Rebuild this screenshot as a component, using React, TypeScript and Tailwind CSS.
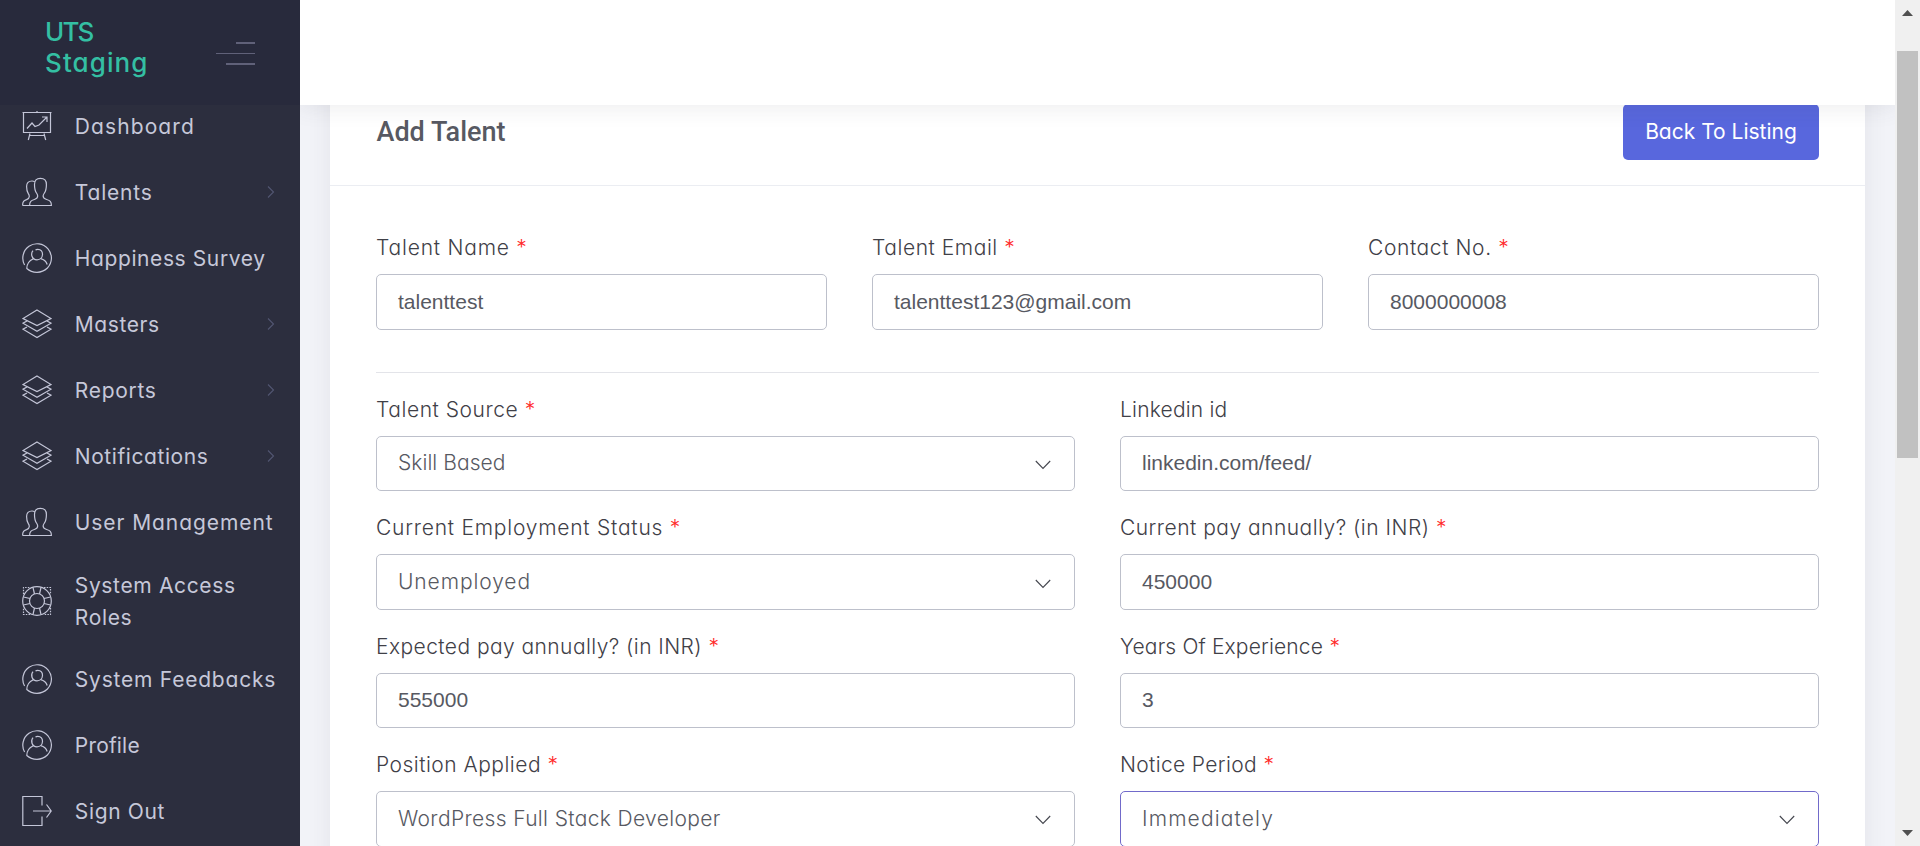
import type { ReactNode } from "react";

const iconPaths: Record<string, ReactNode> = {
  board: (
    <>
      <path d="M.5 1.500h29M1.500 1.500v20h27v-20M15 0v1.500M8 22.500 6.300 29M22 22.500 23.700 29M7.500 24.500h15" />
      <path d="M5 17.500 10 12l3 3.500L17 14l7.500-7.500M20 6h5v5" />
    </>
  ),
  users: (
    <>
      <path d="M.6 28.500h28.800c0-4.200-1.400-5-4.800-6-2.600-.8-3.500-1.700-3.500-3.500 0-1 .5-1.800 1.300-3 1.400-2 2-5 2-8.600C24.400 3.500 22.500 1.400 18.400 1.400S12.500 3.500 12.500 7.400c0 3.600.6 6.600 2 8.600.8 1.200 1.200 2 1.200 3 0 1.800-1 2.700-3.300 3.500-3.200 1.100-4.800 1.800-4.800 6" />
      <path d="M12.700 4.700c-.7-.5-1.600-.7-2.700-.7-3.500 0-5.400 2-5.400 5.400 0 3.200.6 5.600 1.700 7.300.7 1.100 1 1.700 1 2.700 0 1.600-.7 2.300-2.800 3.200-2.600 1-3.900 1.800-3.900 5.900" />
    </>
  ),
  user: (
    <>
      <path d="M2.600 22A14.300 14.300 0 1 1 25.400 25C22 28.300 18.500 29.300 15 29.300S7.500 28 4.800 25.500C4.800 20.500 7.800 17.300 11.300 15.700" />
      <path d="M25.200 21.500c-1-3.200-3.200-5-6.500-5.900" />
      <path d="M11 7.600C8.500 10.500 9.500 16.800 15 16.800c7 0 7.400-10.500.8-10.500-1 0-1.800.3-2.300.8" />
    </>
  ),
  layers: (
    <path d="M15 1 29 9.500 15 16.500 1 9.500ZM5 12 1 14.200 15 22.300l14-8.100-4-2.200M5 18 1 20.200 15 28.500l14-8.300-4-2.200" />
  ),
  ring: (
    <>
      <circle cx="15" cy="15" r="14.300" />
      <circle cx="15" cy="15" r="7.500" />
      <path d="M12.500 8 11 1.500M17.500 8 19 1.500M12.500 22 11 28.500M17.500 22l1.500 6.500M8 12.500 1.500 11M8 17.500 1.500 19M22 12.500l6.500-1.500M22 17.500l6.500 1.500" />
      <path strokeDasharray="1.500 1.200" d="M1.500 8V1.500H8M22 1.500h6.500V8M28.500 22v6.500H22M8 28.500H1.500V22" />
    </>
  ),
  out: <path d="M20 9.500v-9H.8v29H20v-9M11 15h18M24.500 8.500 29.200 15l-4.700 6.500" />,
};

function Icon({ name }: { name: string }) {
  return (
    <svg className="h-[30px] w-[30px] shrink-0" viewBox="0 0 30 30" fill="none" stroke="#c4c6d8" strokeWidth="1.2">
      {iconPaths[name]}
    </svg>
  );
}

function NavItem({ icon, children, spacing, more }: { icon: string; children: ReactNode; spacing: string; more?: boolean }) {
  return (
    <li className="flex min-h-[66px] items-center py-[12.500px] pr-[25px] pl-[22px]">
      <Icon name={icon} />
      <span className={`ml-[22.800px] flex-1 pt-0.5 text-[21px] leading-8 whitespace-nowrap text-[#c6c8d9] ${spacing}`}>{children}</span>
      {more && (
        <svg className="h-3 w-2 shrink-0" viewBox="0 0 8 12" fill="none" stroke="#525672" strokeWidth="1.1">
          <path d="M1 .5 6.500 6 1 11.500" />
        </svg>
      )}
    </li>
  );
}

interface FieldProps {
  label: string;
  labelSpacing: string;
  value: string;
  required?: boolean;
  select?: string;
  focused?: boolean;
  tall?: boolean;
}

function Field({ label, labelSpacing, value, required, select, focused, tall }: FieldProps) {
  return (
    <div className="min-w-0">
      <div className="flex h-8 items-center text-[21px] leading-8 font-light whitespace-nowrap text-[#3f4047]">
        <span className={labelSpacing}>{label}</span>
        {required && <span className="ml-[6.500px] text-[#ff2a2a]">*</span>}
      </div>
      <div
        className={`mt-2.5 flex items-center justify-between rounded-[5px] border bg-white pr-[23px] pl-[21px] text-[21px] text-[#575962] ${tall ? "h-14" : "h-[55.400px]"} ${focused ? "border-[#716aca]" : "border-[#bdc0cb]"}`}
      >
        {select ? (
          <>
            <span className={`pb-px font-light whitespace-nowrap ${select}`}>{value}</span>
            <svg className="mt-[3px] h-[10px] w-4" viewBox="0 0 16 10" fill="none" stroke="#44464e" strokeWidth="1.1">
              <path d="M.8 1 8 8.500 15.200 1" />
            </svg>
          </>
        ) : (
          <span className={`font-['Liberation_Sans',Arial,sans-serif] ${tall ? "" : "pb-px"}`}>{value}</span>
        )}
      </div>
    </div>
  );
}

function Sidebar() {
  return (
    <aside className="flex w-[300px] shrink-0 flex-col overflow-hidden bg-[#2c2e3e]">
      <div className="z-10 flex h-[105px] shrink-0 items-start justify-between bg-[#282a3c] pt-4 pr-[45px] pl-[45px]">
        <div className="text-[26px] leading-[31px] font-medium text-[#34bfa3]">
          <div className="tracking-[-1.8px]">UTS</div>
          <div className="tracking-[1.1px]">Staging</div>
        </div>
        <div className="mt-[26px] flex flex-col items-end">
          <span className="h-0.5 w-[19px] bg-[#606179]" />
          <span className="mt-[9px] h-px w-[39px] bg-[#606179]" />
          <span className="mt-[9px] h-0.5 w-[29px] bg-[#606179]" />
        </div>
      </div>
      <ul className="-mt-3">
        <NavItem icon="board" spacing="tracking-[1.100px]">Dashboard</NavItem>
        <NavItem icon="users" spacing="tracking-[0.800px]" more>Talents</NavItem>
        <NavItem icon="user" spacing="tracking-[0.600px]">Happiness Survey</NavItem>
        <NavItem icon="layers" spacing="tracking-[0.600px]" more>Masters</NavItem>
        <NavItem icon="layers" spacing="tracking-[0.700px]" more>Reports</NavItem>
        <NavItem icon="layers" spacing="tracking-[0.570px]" more>Notifications</NavItem>
        <NavItem icon="users" spacing="tracking-[0.920px]">User Management</NavItem>
        <NavItem icon="ring" spacing="tracking-[0.650px]">
          System Access
          <br />
          Roles
        </NavItem>
        <NavItem icon="user" spacing="tracking-[0.780px]">System Feedbacks</NavItem>
        <NavItem icon="user" spacing="tracking-[0.180px]">Profile</NavItem>
        <NavItem icon="out" spacing="tracking-[0.650px]">Sign Out</NavItem>
      </ul>
    </aside>
  );
}

function Scrollbar() {
  return (
    <div className="flex w-[25px] shrink-0 flex-col items-center bg-[#f0f0f0]">
      <svg className="mt-[10px] h-1.5 w-[11px] shrink-0" viewBox="0 0 11 6" fill="#505050">
        <path d="M5.500 0 11 6H0Z" />
      </svg>
      <div className="mt-[35px] h-[407px] w-[21px] shrink-0 bg-[#c1c1c1]" />
      <svg className="mt-auto mb-[10px] h-1.5 w-[11px] shrink-0" viewBox="0 0 11 6" fill="#505050">
        <path d="M5.500 6 11 0H0Z" />
      </svg>
    </div>
  );
}

export default function App() {
  return (
    <div className="flex h-[846px] overflow-hidden bg-[#f2f3f8] font-['Inter',sans-serif] [font-feature-settings:'cv11']">
      <Sidebar />
      <main className="flex min-w-0 flex-1 flex-col overflow-hidden">
        <header className="z-10 h-[105px] shrink-0 bg-white shadow-[0_1px_22px_1px_rgba(69,65,78,0.1)]" />
        <section className="mx-[30px] -mt-[26px] h-[900px] shrink-0 bg-white shadow-[0_1px_22px_1px_rgba(69,65,78,0.08)]">
          <div className="flex h-[107px] items-center justify-between border-b border-[#ebedf2] px-[46px]">
            <h3 className="pl-[0.5px] font-['Roboto',sans-serif] text-[27px] font-medium text-[#575962]">Add Talent</h3>
            <button className="h-14 w-[196px] rounded-[5px] bg-[#5867dd] text-[21px] tracking-normal whitespace-nowrap text-white">
              Back To Listing
            </button>
          </div>
          <div className="px-[46px] pt-[46px]">
            <div className="grid grid-cols-3 gap-x-[45px]">
              <Field label="Talent Name" labelSpacing="tracking-[0.800px]" value="talenttest" required tall />
              <Field label="Talent Email" labelSpacing="tracking-[0.550px]" value="talenttest123@gmail.com" required tall />
              <Field label="Contact No." labelSpacing="tracking-[0.600px]" value="8000000008" required tall />
            </div>
            <hr className="mt-[42px] border-[#e3e4e9]" />
            <div className="mt-[21px] grid grid-cols-2 gap-x-[45px] gap-y-[21px]">
              <Field label="Talent Source" labelSpacing="tracking-[0.550px]" value="Skill Based" required select="tracking-[0.050px]" />
              <Field label="Linkedin id" labelSpacing="tracking-[0.200px]" value="linkedin.com/feed/" />
              <Field label="Current Employment Status" labelSpacing="tracking-[0.770px]" value="Unemployed" required select="tracking-[0.900px]" />
              <Field label="Current pay annually? (in INR)" labelSpacing="tracking-[0.480px]" value="450000" required />
              <Field label="Expected pay annually? (in INR)" labelSpacing="tracking-[0.430px]" value="555000" required />
              <Field label="Years Of Experience" labelSpacing="tracking-[0.150px]" value="3" required />
              <Field label="Position Applied" labelSpacing="tracking-[0.490px]" value="WordPress Full Stack Developer" required select="tracking-[0.350px]" />
              <Field label="Notice Period" labelSpacing="tracking-[0.350px]" value="Immediately" required select="tracking-[1.150px]" focused />
            </div>
          </div>
        </section>
      </main>
      <Scrollbar />
    </div>
  );
}
